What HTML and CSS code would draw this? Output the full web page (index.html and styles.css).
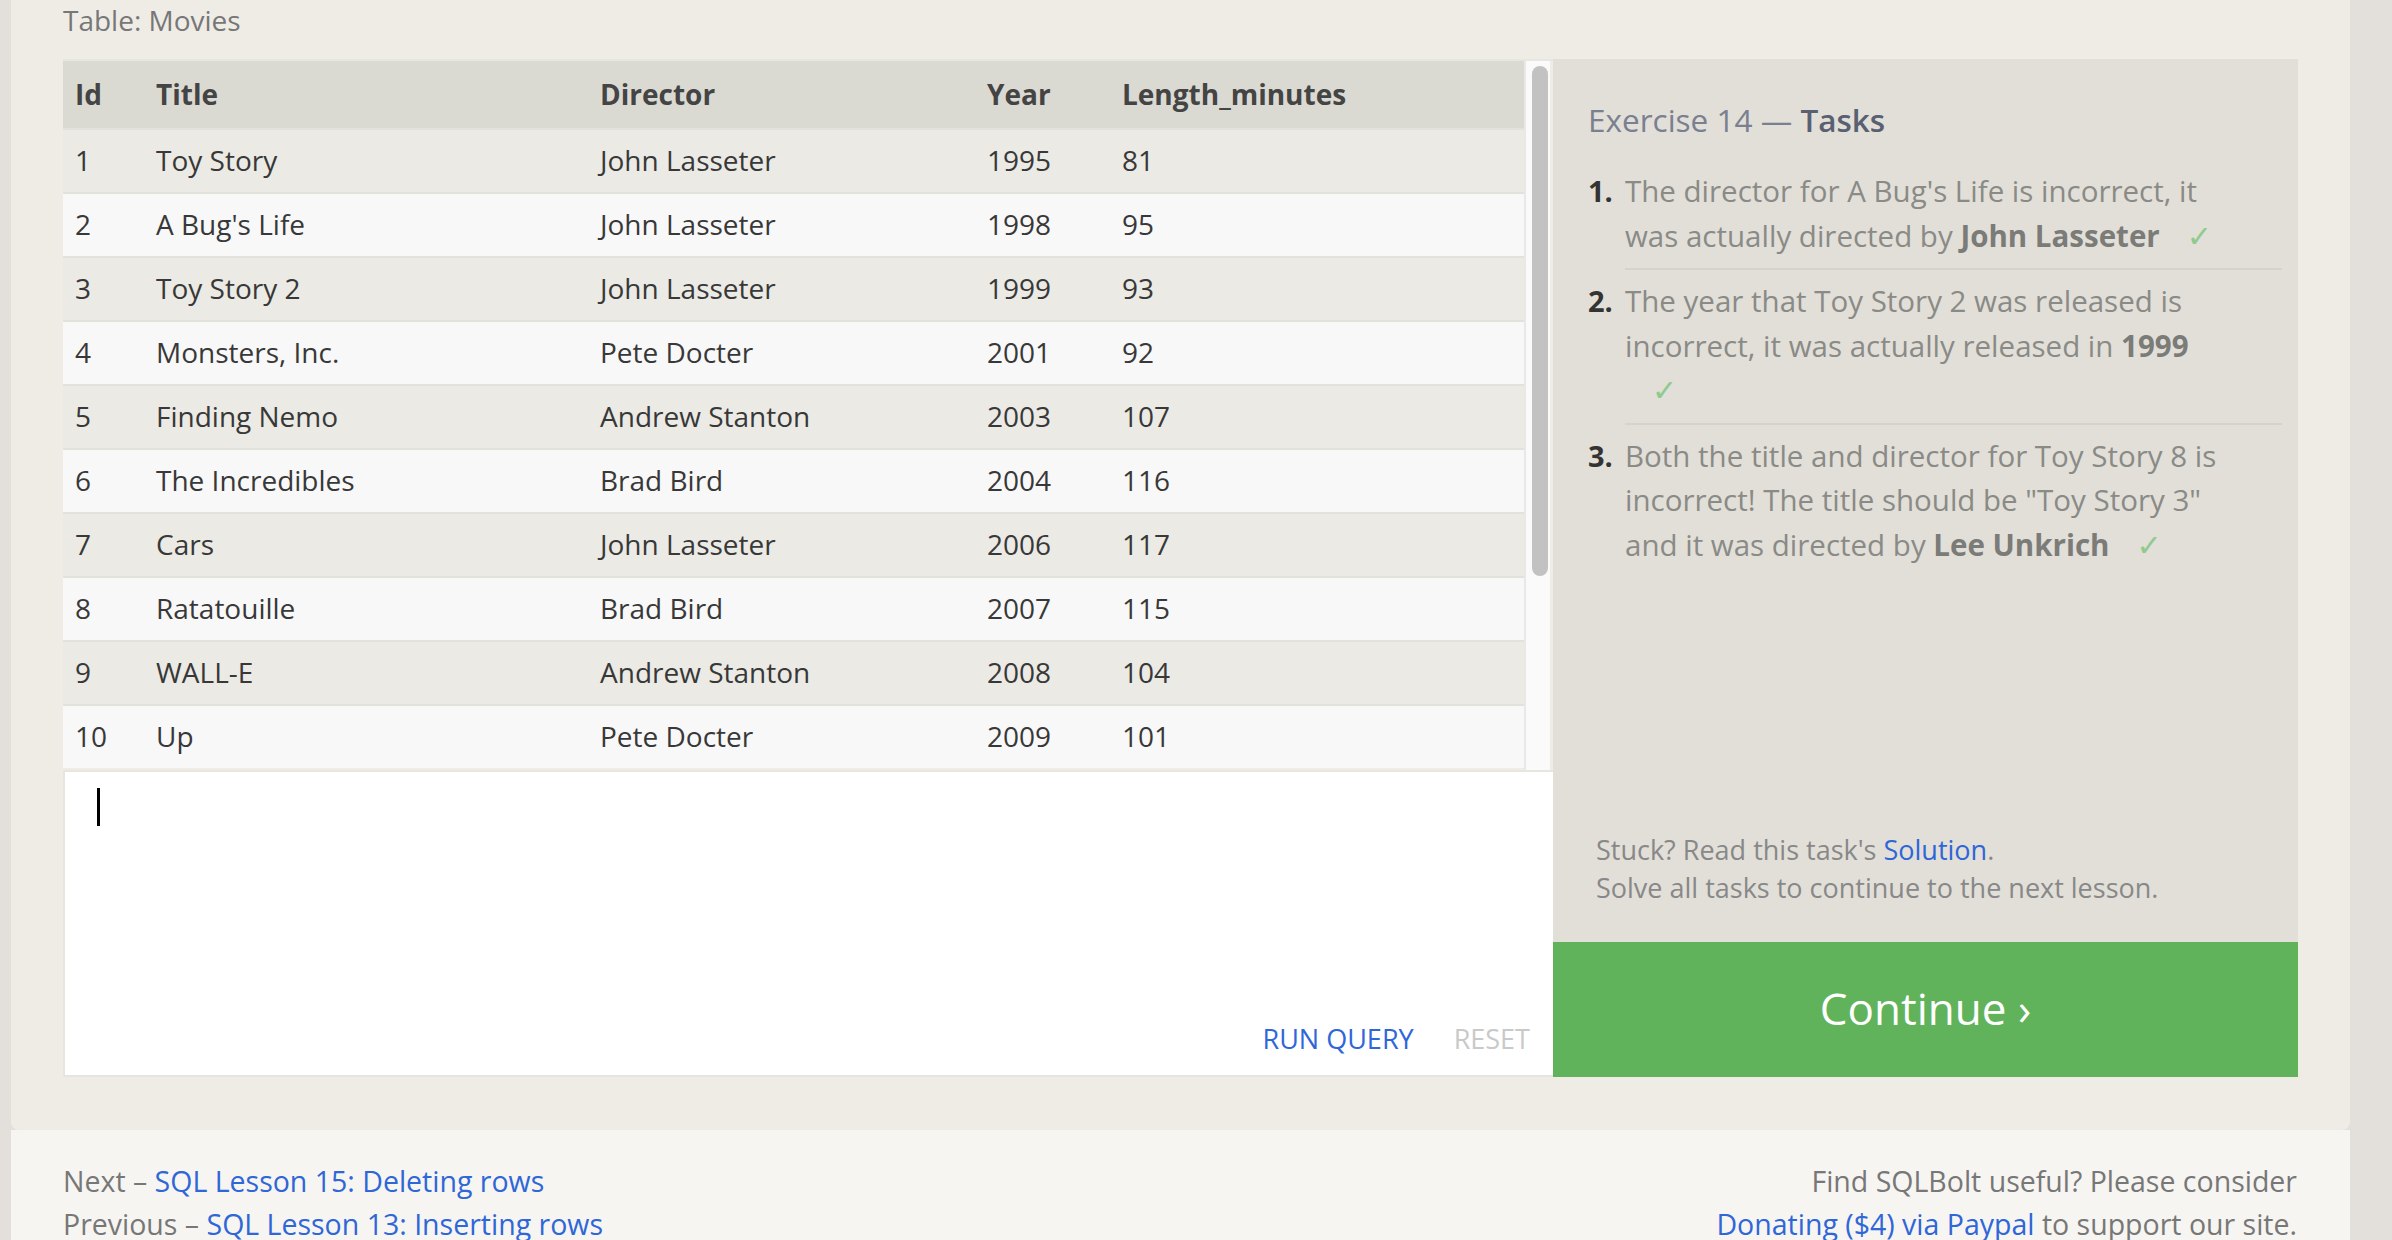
FILE: index.html
```html
<!DOCTYPE html>
<html lang="en">
<head>
<meta charset="utf-8">
<title>SQL Lesson 14: Updating rows</title>
<link rel="stylesheet" href="styles.css">
</head>
<body>
<div class="page">
  <section class="exercise">
    <div class="table-label">Table: Movies</div>
    <div class="workspace">
      <div class="left">
        <div class="table-frame">
          <div class="table-scroll">
            <table class="results">
              <colgroup>
                <col class="c-id"><col class="c-title"><col class="c-dir"><col class="c-year"><col>
              </colgroup>
              <thead>
                <tr><th>Id</th><th>Title</th><th>Director</th><th>Year</th><th>Length_minutes</th></tr>
              </thead>
              <tbody>
                <tr><td>1</td><td>Toy Story</td><td>John Lasseter</td><td>1995</td><td>81</td></tr>
                <tr><td>2</td><td>A Bug's Life</td><td>John Lasseter</td><td>1998</td><td>95</td></tr>
                <tr><td>3</td><td>Toy Story 2</td><td>John Lasseter</td><td>1999</td><td>93</td></tr>
                <tr><td>4</td><td>Monsters, Inc.</td><td>Pete Docter</td><td>2001</td><td>92</td></tr>
                <tr><td>5</td><td>Finding Nemo</td><td>Andrew Stanton</td><td>2003</td><td>107</td></tr>
                <tr><td>6</td><td>The Incredibles</td><td>Brad Bird</td><td>2004</td><td>116</td></tr>
                <tr><td>7</td><td>Cars</td><td>John Lasseter</td><td>2006</td><td>117</td></tr>
                <tr><td>8</td><td>Ratatouille</td><td>Brad Bird</td><td>2007</td><td>115</td></tr>
                <tr><td>9</td><td>WALL-E</td><td>Andrew Stanton</td><td>2008</td><td>104</td></tr>
                <tr><td>10</td><td>Up</td><td>Pete Docter</td><td>2009</td><td>101</td></tr>
              </tbody>
            </table>
          </div>
          <div class="scrollbar"><div class="thumb"></div></div>
        </div>
        <div class="editor">
          <span class="caret"></span>
          <div class="editor-actions">
            <span class="run">RUN QUERY</span>
            <span class="reset">RESET</span>
          </div>
        </div>
      </div>
      <div class="right">
        <div class="tasks">
          <h3 class="tasks-title">Exercise 14 — <span class="tasks-strong">Tasks</span></h3>
          <ol class="task-list">
            <li><span class="num">1.</span><div class="task-text">The director for A Bug's Life is incorrect, it<br>was actually directed by <b>John Lasseter</b><span class="check">✓</span></div></li>
            <li><span class="num">2.</span><div class="task-text">The year that Toy Story 2 was released is<br>incorrect, it was actually released in <b>1999</b><br><span class="check">✓</span></div></li>
            <li><span class="num">3.</span><div class="task-text">Both the title and director for Toy Story 8 is<br>incorrect! The title should be "Toy Story 3"<br>and it was directed by <b>Lee Unkrich</b><span class="check">✓</span></div></li>
          </ol>
          <div class="tasks-help">
            <p>Stuck? Read this task's <a href="#">Solution</a>.</p>
            <p>Solve all tasks to continue to the next lesson.</p>
          </div>
        </div>
        <div class="continue">Continue ›</div>
      </div>
    </div>
  </section>
  <footer class="footer">
    <div class="footer-nav">
      <div>Next – <a href="#">SQL Lesson 15: Deleting rows</a></div>
      <div>Previous – <a href="#">SQL Lesson 13: Inserting rows</a></div>
    </div>
    <div class="footer-donate">
      <div>Find SQLBolt useful? Please consider</div>
      <div><a href="#">Donating ($4) via Paypal</a> to support our site.</div>
    </div>
  </footer>
</div>
</body>
</html>
```
FILE: styles.css
```css
html, body {
  margin: 0;
  padding: 0;
  background: #e3e0dc;
}
body {
  font-family: "Open Sans", "DejaVu Sans", sans-serif;
  color: #333;
  overflow: hidden;
}
a {
  color: #2f66d8;
  text-decoration: none;
}
.page {
  margin-left: 11px;
  width: 2339px;
}
.exercise {
  background: #efece6;
  padding: 0 52px 53px 52px;
  border-radius: 0 0 8px 8px;
}
.table-label {
  font-size: 28px;
  line-height: 40px;
  height: 42px;
  color: #777;
  margin-bottom: 17px;
}
.workspace {
  display: flex;
}
.left {
  width: 1490px;
  display: flex;
  flex-direction: column;
}
.table-frame {
  height: 711px;
  box-sizing: border-box;
  border-top: 2px solid #e7e6e0;
  display: flex;
}
.table-scroll {
  flex: 1;
  overflow: hidden;
}
.scrollbar {
  width: 26px;
  flex: none;
  background: #fafafa;
  border-left: 2px solid #e8e8e6;
  margin-right: 3px;
  padding: 5px 0 0 6px;
  box-sizing: border-box;
}
.thumb {
  width: 16px;
  height: 510px;
  border-radius: 8px;
  background: #c2c2c2;
}
.results {
  width: 100%;
  table-layout: fixed;
  border-collapse: separate;
  border-spacing: 0;
  font-size: 28px;
}
.c-id { width: 81px; }
.c-title { width: 444px; }
.c-dir { width: 387px; }
.c-year { width: 135px; }
.results th {
  background: #dbdad2;
  color: #444;
  font-weight: 700;
  text-align: left;
  line-height: 67px;
  padding: 0 0 0 12px;
  white-space: nowrap;
}
.results td {
  line-height: 62px;
  padding: 0 0 2px 12px;
  height: 60px;
  border-top: 2px solid #e2e1dc;
  color: #383838;
  white-space: nowrap;
}
.results td {
  line-height: 60px;
}
.results tbody tr:nth-child(odd) td {
  background: #ebeae4;
}
.results tbody tr:nth-child(even) td {
  background: #f8f8f8;
}
.editor {
  height: 307px;
  box-sizing: border-box;
  background: #fff;
  border: 2px solid #e6e5e0;
  border-right: none;
  padding: 16px 23px 16px 32px;
  display: flex;
  flex-direction: column;
}
.caret {
  display: block;
  width: 3px;
  height: 38px;
  background: #000;
}
.editor-actions {
  margin-top: auto;
  display: flex;
  justify-content: flex-end;
  gap: 40px;
  font-size: 27px;
  line-height: 40px;
}
.run {
  color: #2f66d8;
}
.reset {
  color: #c9c9c9;
}
.right {
  width: 745px;
  display: flex;
  flex-direction: column;
}
.tasks {
  flex: 1;
  background: #e1dfd8;
  padding: 40px 16px 35px 35px;
  display: flex;
  flex-direction: column;
}
.tasks-title {
  margin: 0;
  font-size: 31.5px;
  line-height: 42px;
  font-weight: 400;
  color: #7a8090;
}
.tasks-strong {
  color: #596072;
  font-weight: 600;
}
.task-list {
  list-style: none;
  margin: 28px 0 0 0;
  padding: 0;
}
.task-list li {
  display: flex;
  align-items: baseline;
}
.num {
  width: 37px;
  flex: none;
  font-size: 29px;
  line-height: 44px;
  font-weight: 700;
  color: #333;
}
.task-text {
  flex: 1;
  font-size: 29.5px;
  line-height: 44.5px;
  color: #8a8a86;
  padding: 9px 0;
  border-bottom: 2px solid #d6d4ca;
  white-space: nowrap;
}
.task-list li:first-child .task-text {
  padding-top: 0;
}
.task-list li:last-child .task-text {
  border-bottom: none;
}
.task-text b {
  color: #7b7b78;
}
.check {
  color: #8fcb8c;
  margin-left: 27px;
  font-family: "DejaVu Sans", sans-serif;
  font-size: 30px;
}
.tasks-help {
  margin-top: auto;
  padding-left: 8px;
  font-size: 27px;
  line-height: 38px;
  color: #888;
}
.tasks-help p {
  margin: 0;
}
.continue {
  height: 135px;
  background: #61b35b;
  color: #fff;
  font-size: 44px;
  line-height: 133px;
  text-align: center;
}
.footer {
  background: #f6f5f1;
  display: flex;
  justify-content: space-between;
  padding: 30px 53px 40px 52px;
  font-size: 28.5px;
  line-height: 43px;
  color: #777;
}
.footer-donate {
  text-align: right;
}
```
